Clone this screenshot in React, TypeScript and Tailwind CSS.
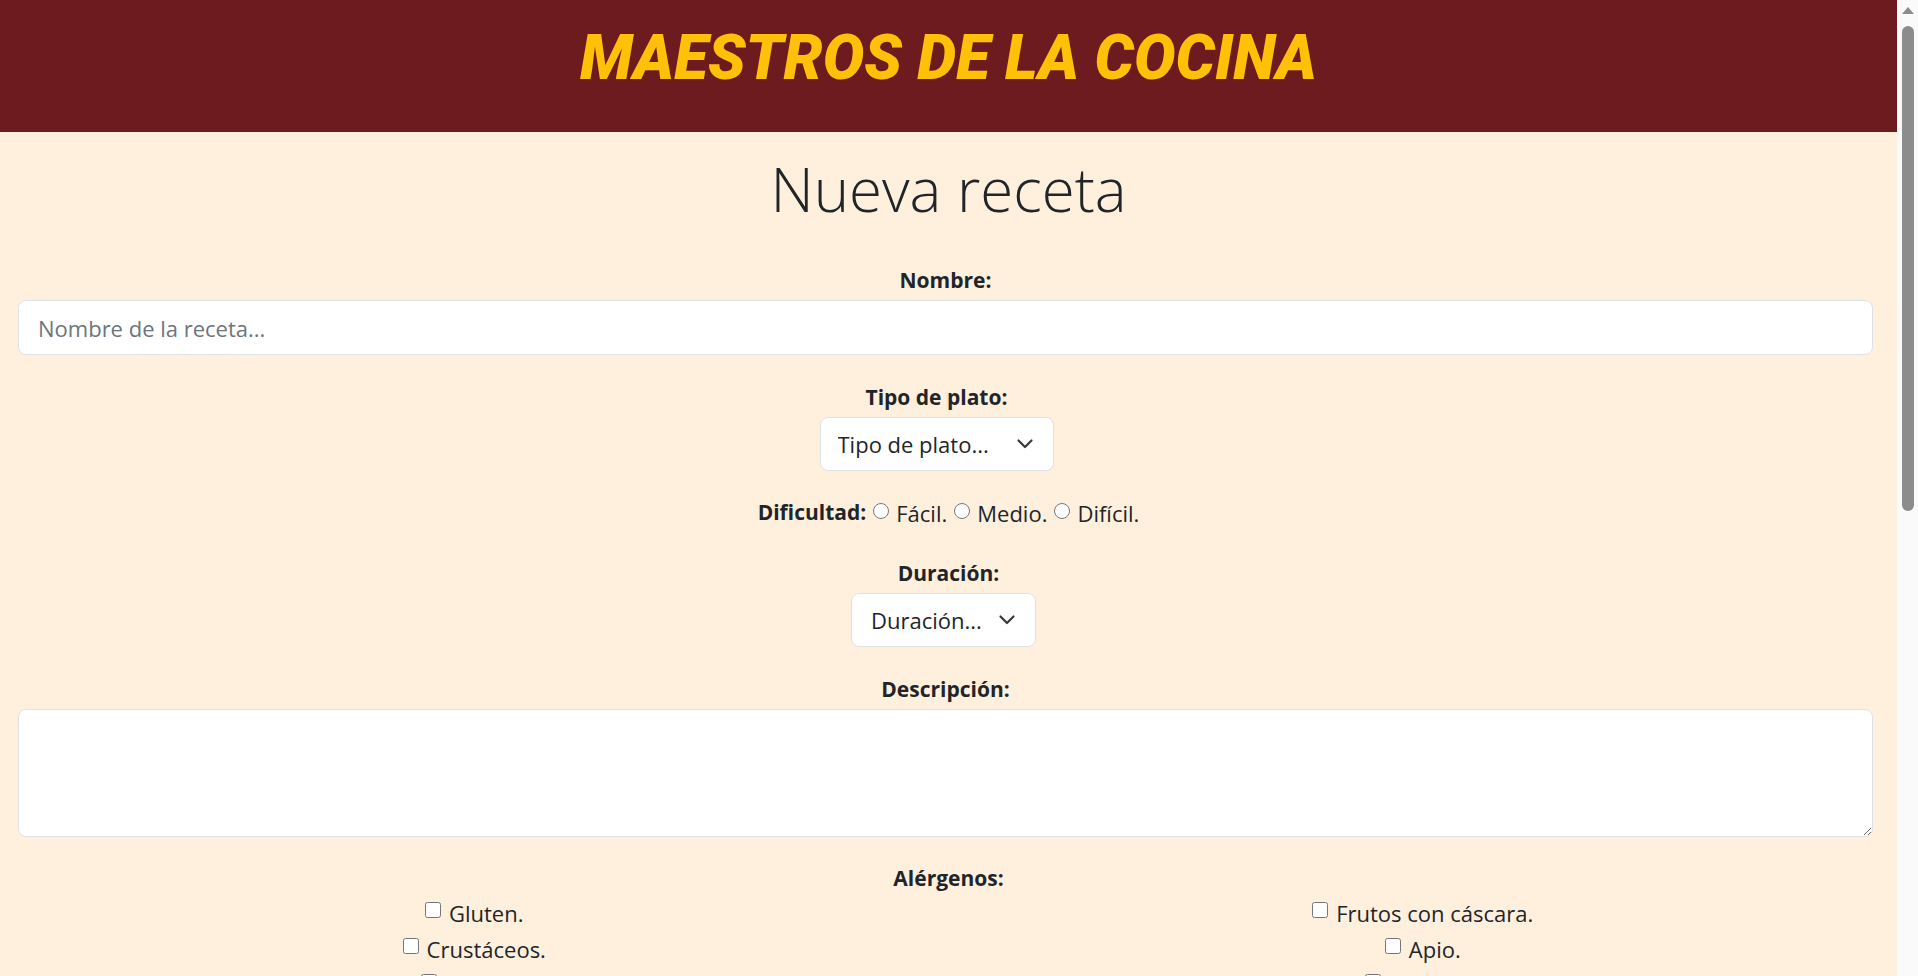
import { useState } from "react";

const ALERGENOS_IZQ = ["Gluten.", "Crustáceos.", "Huevos.", "Pescado.", "Cacahuetes.", "Soja.", "Lácteos."];
const ALERGENOS_DER = ["Frutos con cáscara.", "Apio.", "Mostaza.", "Sésamo.", "Sulfitos.", "Altramuces.", "Moluscos."];

function Chevron() {
  return (
    <svg
      className="pointer-events-none absolute top-1/2 right-[20px] -translate-y-1/2"
      width="18"
      height="12"
      viewBox="0 0 18 12"
      fill="none"
      stroke="#343a40"
      strokeWidth="2.2"
      strokeLinecap="round"
      strokeLinejoin="round"
    >
      <path d="M2.5 2.5l6.5 6.5 6.5-6.5" />
    </svg>
  );
}

function Label({ children, htmlFor }: { children: React.ReactNode; htmlFor?: string }) {
  return (
    <label htmlFor={htmlFor} className="mb-[4px] block text-center text-[21px] leading-[32px] font-bold">
      {children}
    </label>
  );
}

export default function App() {
  const [dificultad, setDificultad] = useState("");

  return (
    <div className="flex h-screen bg-[#fff0de] font-['Open_Sans',sans-serif] text-[#212529]">
      {/* página con scroll propio */}
      <div className="flex-1 overflow-y-auto [scrollbar-width:none]">
        <header className="h-[132px] bg-[#6d1b1e] pt-[27px] text-center">
          <h1 className="font-['Roboto',sans-serif] text-[62px] leading-none font-black text-[#ffc107] italic">
            MAESTROS DE LA COCINA
          </h1>
        </header>

        <main className="pt-[21px]">
          <h2 className="text-center text-[60px] leading-[1.2] font-light">Nueva receta</h2>

          <form className="mt-[39px] flex flex-col">
            {/* nombre */}
            <div className="mr-[24px] mb-[26px] ml-[18px]">
              <Label htmlFor="nombre">Nombre:</Label>
              <input
                id="nombre"
                type="text"
                placeholder="Nombre de la receta..."
                className="block h-[55px] w-full rounded-lg border border-[#dee2e6] bg-white px-[19px] text-[22px] outline-none placeholder:text-[#6c757d]"
              />
            </div>

            {/* tipo de plato */}
            <div className="mb-[26px] flex flex-col items-center pr-[24px]">
              <Label htmlFor="tipo">Tipo de plato:</Label>
              <div className="relative">
                <select
                  id="tipo"
                  defaultValue=""
                  className="block h-[54px] w-[234px] appearance-none rounded-lg border border-[#dee2e6] bg-white pl-[17px] text-[22px] outline-none"
                >
                  <option value="">Tipo de plato...</option>
                  <option>Entrante</option>
                  <option>Principal</option>
                  <option>Postre</option>
                </select>
                <Chevron />
              </div>
            </div>

            {/* dificultad */}
            <div className="mb-[28px] flex h-[32px] items-center justify-center text-[22px]">
              <span className="text-[21px] font-bold">Dificultad:</span>
              {["Fácil.", "Medio.", "Difícil."].map((d) => (
                <label key={d} className="flex items-center">
                  <input
                    type="radio"
                    name="dificultad"
                    checked={dificultad === d}
                    onChange={() => setDificultad(d)}
                    className="mx-[7px] -mt-[4px] h-4 w-4"
                  />
                  {d}
                </label>
              ))}
            </div>

            {/* duración */}
            <div className="mb-[26px] flex flex-col items-center">
              <Label htmlFor="duracion">Duración:</Label>
              <div className="relative mr-[10px]">
                <select
                  id="duracion"
                  defaultValue=""
                  className="block h-[54px] w-[185px] appearance-none rounded-lg border border-[#dee2e6] bg-white pl-[19px] text-[22px] outline-none"
                >
                  <option value="">Duración...</option>
                  <option>15 min</option>
                  <option>30 min</option>
                  <option>1 hora</option>
                </select>
                <Chevron />
              </div>
            </div>

            {/* descripción */}
            <div className="mr-[24px] mb-[25px] ml-[18px]">
              <Label htmlFor="descripcion">Descripción:</Label>
              <textarea
                id="descripcion"
                className="block h-[128px] w-full rounded-lg border border-[#dee2e6] bg-white px-[19px] py-[10px] text-[22px] outline-none"
              />
            </div>

            {/* alérgenos */}
            <div className="mb-[26px]">
              <label className="mb-[1px] block text-center text-[21px] leading-[32px] font-bold">Alérgenos:</label>
              <div className="grid grid-cols-2 text-[22px]">
                {[ALERGENOS_IZQ, ALERGENOS_DER].map((col, i) => (
                  <div key={i} className="flex flex-col">
                    {col.map((a) => (
                      <label key={a} className="flex h-[36px] items-center justify-center gap-2">
                        <input type="checkbox" className="-mt-[6px] h-4 w-4" />
                        {a}
                      </label>
                    ))}
                  </div>
                ))}
              </div>
            </div>

            {/* ingredientes */}
            <div className="mr-[24px] mb-[26px] ml-[18px]">
              <Label htmlFor="ingredientes">Ingredientes:</Label>
              <textarea
                id="ingredientes"
                placeholder="Un ingrediente por línea..."
                className="block h-[128px] w-full rounded-lg border border-[#dee2e6] bg-white px-[19px] py-[10px] text-[22px] outline-none placeholder:text-[#6c757d]"
              />
            </div>

            {/* pasos */}
            <div className="mr-[24px] mb-[26px] ml-[18px]">
              <Label htmlFor="pasos">Pasos:</Label>
              <textarea
                id="pasos"
                placeholder="Describe la preparación paso a paso..."
                className="block h-[128px] w-full rounded-lg border border-[#dee2e6] bg-white px-[19px] py-[10px] text-[22px] outline-none placeholder:text-[#6c757d]"
              />
            </div>

            {/* imagen */}
            <div className="mb-[30px] flex flex-col items-center">
              <Label htmlFor="imagen">Imagen:</Label>
              <input id="imagen" type="file" className="text-[18px]" />
            </div>

            <div className="mb-[40px] flex justify-center">
              <button
                type="button"
                className="h-[54px] rounded-lg bg-[#6d1b1e] px-[32px] text-[22px] font-bold text-[#ffc107]"
              >
                Guardar receta
              </button>
            </div>
          </form>
        </main>

        <footer className="flex h-[150px] items-center justify-center bg-[#6d1b1e] text-[20px] text-[#ffc107]">
          © Maestros de la Cocina
        </footer>
      </div>

      {/* barra de desplazamiento */}
      <div className="flex w-[21px] shrink-0 flex-col items-center bg-[#fafafa] pt-[6px] pl-[1px]">
        <svg width="14" height="9" viewBox="0 0 14 9">
          <path d="M7 1 13 8H1z" fill="#8c8c8c" />
        </svg>
        <div className="mt-[11px] h-[485px] w-[12px] rounded-full bg-[#8c8c8c]" />
      </div>
    </div>
  );
}
